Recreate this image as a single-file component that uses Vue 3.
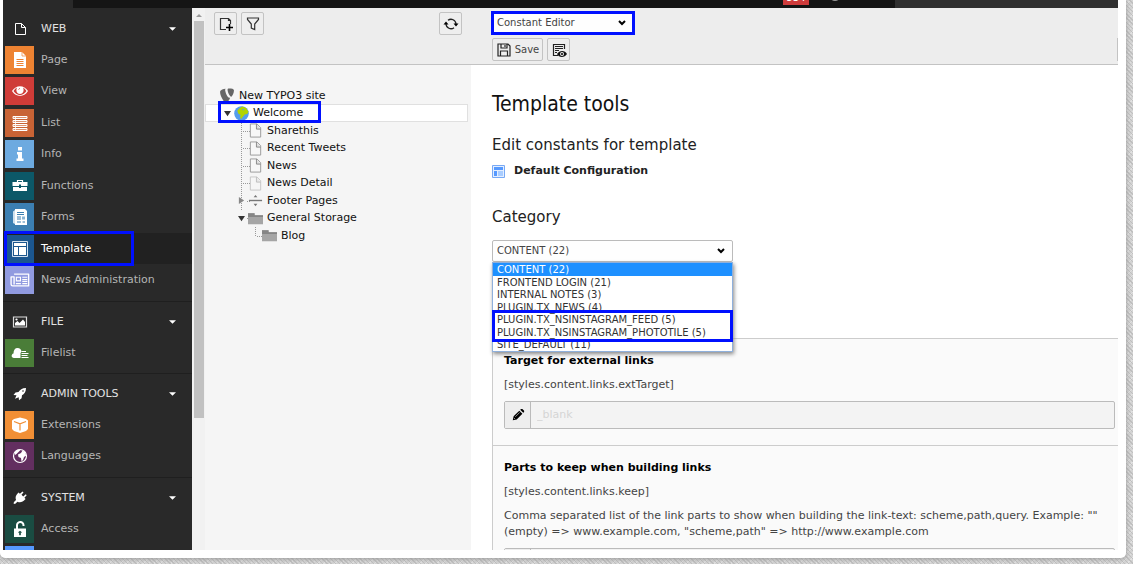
<script setup>
import { ref } from 'vue'

const modules = [
  {
    name: 'WEB', icon: 'file',
    items: [
      { label: 'Page', icon: 'page', tone: 'orange' },
      { label: 'View', icon: 'eye', tone: 'red' },
      { label: 'List', icon: 'list', tone: 'rust' },
      { label: 'Info', icon: 'info', tone: 'sky' },
      { label: 'Functions', icon: 'case', tone: 'teal' },
      { label: 'Forms', icon: 'forms', tone: 'steel' },
      { label: 'Template', icon: 'template', tone: 'navy', active: true },
      { label: 'News Administration', icon: 'news', tone: 'lilac' }
    ]
  },
  { name: 'FILE', icon: 'image', items: [{ label: 'Filelist', icon: 'cloud', tone: 'green' }] },
  {
    name: 'ADMIN TOOLS', icon: 'rocket',
    items: [
      { label: 'Extensions', icon: 'box', tone: 'amber' },
      { label: 'Languages', icon: 'globe', tone: 'plum' }
    ]
  },
  {
    name: 'SYSTEM', icon: 'plug',
    items: [
      { label: 'Access', icon: 'lock', tone: 'forest' },
      { label: '', icon: '', tone: 'blue' }
    ]
  }
]

const tree = [
  { label: 'New TYPO3 site', icon: 'typo3', depth: 0 },
  { label: 'Welcome', icon: 'earth', depth: 1, toggle: 'open', active: true },
  { label: 'Sharethis', icon: 'doc', depth: 2 },
  { label: 'Recent Tweets', icon: 'doc', depth: 2 },
  { label: 'News', icon: 'doc', depth: 2 },
  { label: 'News Detail', icon: 'doc', depth: 2, faded: true },
  { label: 'Footer Pages', icon: 'spacer', depth: 2, toggle: 'closed' },
  { label: 'General Storage', icon: 'folder', depth: 2, toggle: 'open' },
  { label: 'Blog', icon: 'folder', depth: 3 }
]

const categories = [
  'CONTENT (22)',
  'FRONTEND LOGIN (21)',
  'INTERNAL NOTES (3)',
  'PLUGIN.TX_NEWS (4)',
  'PLUGIN.TX_NSINSTAGRAM_FEED (5)',
  'PLUGIN.TX_NSINSTAGRAM_PHOTOTILE (5)',
  'SITE_DEFAULT (11)'
]
const category = ref(categories[0])
const tool = ref('Constant Editor')
</script>

<template>
  <div class="page">
    <div class="card">
      <div class="app">
        <header class="topbar">
          <div class="brand"></div>
          <div class="tools">
            <span class="badge">534</span>
            <span class="help"></span>
          </div>
          <div class="search"></div>
        </header>

        <div class="body">
          <nav class="modules">
            <section v-for="group in modules" :key="group.name" class="group">
              <button class="group-head" type="button">
                <span class="tile">
                  <svg v-if="group.icon === 'file'" viewBox="0 0 16 16"><path d="M3.500 2.500h6l4 4v7h-10zM9.500 2.500v4h4" fill="none" stroke="#fff" /></svg>
                  <svg v-else-if="group.icon === 'image'" viewBox="0 0 16 16"><path d="M1.500 3h13v10h-13z" fill="none" stroke="#ddd" stroke-width="1.200" /><path d="M3 11.500V9l2.500-2 2 2 3.500-3.500 2 2.500v3.500z" fill="#fff" /><circle cx="4.500" cy="5.500" r="1.100" fill="#fff" /></svg>
                  <svg v-else-if="group.icon === 'rocket'" viewBox="0 0 16 16"><path d="M14 2c-4 0-6 2-7.500 4L3.500 6.500 1.500 9l3 .3L3 12.800l3.700-1.500.3 3 2.600-2 .4-3C12 8 14 6 14 2z" fill="#fff" /><circle cx="11" cy="5" r=".8" fill="#292929" /></svg>
                  <svg v-else viewBox="0 0 16 16"><path d="M10.500 1.500l1 1-2 2.300 1.700 1.700 2.600-2.200.9.900-2.300 2.600 1.200 1.200-.8.800C11 12 8 13 5.500 11.700L3 14l-1.500-.5L2 12l2-2C3 7.500 4 5 5.800 3.300l.8-.8L7.900 3.800z" fill="#fff" /></svg>
                </span>
                <span class="label">{{ group.name }}</span>
                <svg class="caret" viewBox="0 0 8 4"><path d="M0 0h8L4 4z" fill="#fff" /></svg>
              </button>
              <a v-for="item in group.items" :key="item.label" href="#" class="item" :class="{ active: item.active }">
                <span class="tile" :class="item.tone">
                  <svg v-if="item.icon === 'page'" viewBox="0 0 16 16"><path d="M2 0h8l4 4v12H2z" fill="#fff" /><path d="M10 0v4h4" fill="none" stroke="#ee8332" stroke-width=".7" /><path d="M4.500 7.500h7M4.500 9.500h7M4.500 11.500h7M4.500 13.500h7" stroke="#ee8332" /></svg>
                  <svg v-else-if="item.icon === 'eye'" viewBox="0 0 16 16"><path d="M0 8c4-6.500 12-6.500 16 0-4 6.500-12 6.500-16 0z" fill="#fff" /><path d="M1.500 8C3 5.500 5 4.500 5 4.500c-1.500 3 0 6.500 3 6.500s4.500-3.500 3-6.500c0 0 2 1 3.500 3.500C11 13.500 5 13.500 1.500 8z" fill="#cf3c38" /><path d="M6.500 6.500a2 2 0 0 1 1.500-1" fill="none" stroke="#cf3c38" stroke-width=".8" /></svg>
                  <svg v-else-if="item.icon === 'list'" viewBox="0 0 16 16"><path d="M1 1.500h14v2H1zM1 5.500h14v2H1zM1 9.500h14v2H1zM1 13.500h14v2H1z" fill="#dd9270" stroke="#fff" /><path d="M3.500 1v14" stroke="#fff" stroke-width=".8" /></svg>
                  <svg v-else-if="item.icon === 'info'" viewBox="0 0 16 16"><path d="M6 1h4v3.500H6zM5 6h5v6.500h1.500V15h-7v-2.500H6v-4H5z" fill="#fff" /></svg>
                  <svg v-else-if="item.icon === 'case'" viewBox="0 0 16 16"><path d="M5.500 4V2.500h5V4" fill="none" stroke="#fff" stroke-width="1.200" /><path d="M.5 4h15v4H.5zM1 9h14v4H1z" fill="#fff" /><path d="M7 6.500h2V10H7z" fill="#0c5868" /></svg>
                  <svg v-else-if="item.icon === 'forms'" viewBox="0 0 16 16"><path d="M1 2.500L3 1v14l-2-1z" fill="#cfe0ee" /><path d="M3 0h10l2 2v14H3z" fill="#fff" /><path d="M5 3.500h7M5 5.500h7M5 8h4M5 10h4M5 13h4M10.500 13h2.500" stroke="#3c7fb2" stroke-width="1.100" /><path d="M10 7.500h3v3h-3z" fill="#8bb4d3" /></svg>
                  <svg v-else-if="item.icon === 'template'" viewBox="0 0 16 16"><path d="M.5.500h15v15H.5z" fill="none" stroke="#d5e2ee" /><path d="M2 2h12v3H2zM2 6h4v8H2zM7 6h7v8H7z" fill="#fff" /></svg>
                  <svg v-else-if="item.icon === 'news'" viewBox="0 0 22 16" class="wide"><path d="M4.500 1.500h16v13H3c-1 0-1.800-.7-1.800-1.700V4.500h3.300v8.500" fill="none" stroke="#fff" stroke-width="1.500" stroke-linejoin="round" /><path d="M7 5h4.500v4H7z" fill="none" stroke="#fff" stroke-width="1.200" /><path d="M13.500 5H19M13.500 7.500H19M13.500 9.500H19M6.500 12H12M13.500 12H19" stroke="#fff" stroke-width="1.200" /></svg>
                  <svg v-else-if="item.icon === 'cloud'" viewBox="0 0 18 16" class="wide"><path d="M9.500 13H3C0 13 0 9 2.500 8.500 2.500 5 4 3 6.500 3s3.500 1.500 4 3.500L9.500 8z" fill="#fff" /><path d="M10.500 6.500H15M10.500 8.500h7M10.500 10.500h6M10.500 12.500h7" stroke="#fff" stroke-width="1.100" /></svg>
                  <svg v-else-if="item.icon === 'box'" viewBox="0 0 16 16"><path d="M0 3.500L2 2l6-1.500L14 2l2 1.500V12l-2 2-6 2-6-2-2-2z" fill="#fff" /><path d="M2 4.500l6 2.300 6-2.300M8 7v6.500" fill="none" stroke="#f18f35" stroke-width="1.200" /></svg>
                  <svg v-else-if="item.icon === 'globe'" viewBox="0 0 16 16"><circle cx="8" cy="8" r="6.500" fill="none" stroke="#fff" stroke-width="1.200" /><path d="M3 4l3-2.500 2.500.5L7 3.500 4.500 6 3 7zM6 6.500L9 5l1.500-2.500L13 4l1.200 3.500L12 9l-1 3-1.500 1.500L9 10 6.500 9z" fill="#fff" /></svg>
                  <svg v-else-if="item.icon === 'lock'" viewBox="0 0 16 16"><path d="M5 8V4.500a3 3 0 0 1 6.500-.5v1" fill="none" stroke="#fff" stroke-width="2" /><path d="M2 7.500h12V16H2z" fill="#fff" /><path d="M8 10l1.500 1.300L8.500 12v2h-1v-2l-1-.7z" fill="#1a4c42" stroke="#1a4c42" stroke-width=".6" /></svg>
                </span>
                <span class="label">{{ item.label }}</span>
                <span v-if="item.active" class="mark"></span>
              </a>
            </section>
          </nav>

          <div class="scroll" aria-hidden="true">
            <svg class="scroll-up" viewBox="0 0 8 4"><path d="M4 0l4 4H0z" fill="#9b9b9b" /></svg>
            <div class="thumb"></div>
          </div>

          <aside class="tree-panel">
            <div class="toolbar tree-tools">
              <button class="btn icon-btn" type="button" aria-label="New page"><svg viewBox="0 0 16 16"><path d="M8 13.500H2.500v-11h8l2 2V8M10.500 2.500v2h2" fill="none" stroke="#333" stroke-width="1.200" /><path d="M11.500 8v7M8 11.500h7" stroke="#000" stroke-width="1.600" /></svg></button>
              <button class="btn icon-btn" type="button" aria-label="Filter"><svg viewBox="0 0 16 16"><path d="M2.500 2h11v1.500L9.700 8v5.500L6.300 12V8L2.500 3.500z" fill="none" stroke="#333" stroke-width="1.200" /></svg></button>
              <button class="btn icon-btn refresh" type="button" aria-label="Refresh"><svg viewBox="0 0 16 16"><path d="M5 4.300A5 5 0 0 1 13 8M11 11.700A5 5 0 0 1 3 8" fill="none" stroke="#222" stroke-width="1.300" /><path d="M10.500 7.500h5L13 10.500zM.5 8.500h5L3 5.500z" fill="#000" /></svg></button>
            </div>
            <div class="tree">
              <svg class="lines" width="80" height="160" aria-hidden="true">
                <path d="M22.500 13v6M27 26.500h4M36.500 36v88M38 44.500h8M38 61.500h8M38 79.500h8M38 96.500h8M42 114.500h4M42 131.500h3M50.500 140v9M52 149.500h8" fill="none" stroke="#999" stroke-dasharray="1 1" />
              </svg>
              <a v-for="node in tree" :key="node.label" href="#" class="node" :class="['d' + node.depth, { active: node.active }]">
                <svg class="toggle" viewBox="0 0 8 8"><path v-if="node.toggle === 'open'" d="M0 1h8L4 7z" fill="#333" /><path v-else-if="node.toggle === 'closed'" d="M1 0l6 4-6 4z" fill="#888" /></svg>
                <svg v-if="node.icon === 'typo3'" class="node-icon" viewBox="0 0 16 16"><path d="M10.800 10.300c-.3.100-.5.100-.8.100-2.300 0-4.500-6.500-4.500-8.200 0-.8.200-1.100.5-1.400C3.200 1.100 1 2 .5 3c-.3.300-.4.800-.4 1.400 0 3 3.200 9.700 5.900 11.300 1.800-.1 3.800-2.500 4.800-5.400M9.700.6c2.600 0 5.200.4 5.200 1.900 0 3-1.900 6.700-2.900 6.700-1.700 0-3.900-4.900-3.900-7.300 0-1.100.4-1.300 1.600-1.300" fill="#666" /></svg>
                <svg v-else-if="node.icon === 'earth'" class="node-icon" viewBox="0 0 16 16"><circle cx="8" cy="8" r="7.800" fill="#559dec" /><path d="M3.500 5L6 2l3-1.500L13 2l2.500 4L14 8.500l-2.500.5-2.500 3-1.500 2-1-2L7 9.500 4.500 8z" fill="#b2d400" /><path d="M8.500 3.500l2-.5-.5 2z" fill="#559dec" /></svg>
                <svg v-else-if="node.icon === 'doc'" class="node-icon" :class="{ faded: node.faded }" viewBox="0 0 16 16"><path d="M2.500 1h7L13.500 5v10h-11z" fill="#f7f7f7" stroke="#999" /><path d="M9 1v5.500h4.500" fill="#ddd" stroke="#888" /></svg>
                <svg v-else-if="node.icon === 'spacer'" class="node-icon" viewBox="0 0 16 16"><path d="M1 8h14" stroke="#777" stroke-width="1.500" /><path d="M8 2l2 2.500H6zM8 14l2-2.500H6z" fill="#777" /></svg>
                <svg v-else class="node-icon" viewBox="0 0 16 16"><path d="M0 2.500h7v2h9V14H0z" fill="#a5a5a5" /><path d="M0 2.500h7v2h9v2H0z" fill="#858585" /></svg>
                <span>{{ node.label }}</span>
                <span v-if="node.active" class="mark"></span>
              </a>
            </div>
          </aside>

          <main class="content">
            <div class="toolbar">
              <div class="select-wrap tool-select">
                <select v-model="tool" aria-label="Template tool"><option>Constant Editor</option></select>
                <svg class="chevron" viewBox="0 0 8 6"><path d="M1 1l3 3 3-3" fill="none" stroke="#000" stroke-width="2" /></svg>
                <span class="mark"></span>
              </div>
              <div class="actions">
                <button class="btn save" type="button"><svg viewBox="0 0 16 16"><path d="M2 2h10l2 2v10H2zM5 2v4h6V2M9 3v2M4.500 14V9h7v5" fill="none" stroke="#222" stroke-width="1.200" /></svg>Save</button>
                <button class="btn icon-btn" type="button" aria-label="Save and view"><svg viewBox="0 0 16 16"><path d="M7 13.500H2.500v-11h11V7M4 4.500h8M4 6.500h8M4 8.500h4M4 10.500h2" fill="none" stroke="#222" stroke-width="1.200" /><path d="M6 12c2.500-4 8-4 10 0-2.500 4-8 4-10 0z" fill="#111" /><circle cx="11" cy="12" r="2" fill="#eee" /><circle cx="11" cy="12" r="1.100" fill="#111" /></svg></button>
                <span class="edge"></span>
              </div>
            </div>

            <div class="module">
              <h1>Template tools</h1>
              <h2>Edit constants for template</h2>
              <p class="config">
                <svg viewBox="0 0 13 13"><path d="M.5.500h12v12H.5z" fill="#e4efff" stroke="#78a9f5" /><path d="M2 2h9v3H2zM2 6h3v5H2z" fill="#5599ff" /><path d="M6 6h5v5H6z" fill="#a9cdff" /></svg>
                <strong>Default Configuration</strong>
              </p>
              <h2><label for="category">Category</label></h2>
              <div class="select-wrap category">
                <select id="category" v-model="category"><option v-for="c in categories" :key="c">{{ c }}</option></select>
                <svg class="chevron" viewBox="0 0 8 6"><path d="M1 1l3 3 3-3" fill="none" stroke="#000" stroke-width="2" /></svg>
                <ul class="popup" role="listbox" aria-label="Category">
                  <li v-for="c in categories" :key="c" role="option" :aria-selected="c === category" @click="category = c">{{ c }}</li>
                  <li class="mark" role="presentation"></li>
                </ul>
              </div>

              <div class="constants">
                <section class="constant">
                  <h3><label for="ext-target">Target for external links</label></h3>
                  <p>[styles.content.links.extTarget]</p>
                  <div class="field">
                    <button type="button" aria-label="Edit target"><svg viewBox="0 0 16 16"><path d="M2 14l1-4.500 6.500-6.500L13 6.500 6.500 13zM10.500 2l1-1h1.500L15 3v1.500l-1 1z" fill="#000" /><path d="M3.500 11.500l1 1M5 10l5-5" stroke="#ddd" stroke-width=".8" /></svg></button>
                    <input id="ext-target" type="text" placeholder="_blank" disabled />
                  </div>
                </section>
                <section class="constant">
                  <h3><label for="keep">Parts to keep when building links</label></h3>
                  <p>[styles.content.links.keep]</p>
                  <p>Comma separated list of the link parts to show when building the link-text: scheme,path,query. Example: ""<br />(empty) =&gt; www.example.com, "scheme,path" =&gt; http://www.example.com</p>
                  <div class="field">
                    <button type="button" aria-label="Edit parts"></button>
                    <input id="keep" type="text" disabled />
                  </div>
                </section>
              </div>
            </div>
          </main>
        </div>
      </div>
    </div>
  </div>
</template>

<style>
body {
  margin: 0;
}
</style>

<style scoped>
* {
  box-sizing: border-box;
}
.page {
  height: 100vh;
  padding: 0 7px 6px 0;
  overflow: hidden;
  font: 11px/16px "DejaVu Sans", Verdana, sans-serif;
  color: #222;
  background-color: #d4d4d4;
  background-image:
    repeating-linear-gradient(45deg, #c0c0c0 0 1px, transparent 1px 3px),
    repeating-linear-gradient(-45deg, #e2e2e2 0 1px, transparent 1px 4px);
}
.card {
  height: 100%;
  padding: 0 8px 8px 3px;
  background: #fff;
  border-radius: 0 0 5px 5px;
  box-shadow: 0 1px 5px #999;
}
.app {
  display: flex;
  flex-direction: column;
  height: 100%;
  overflow: hidden;
}
a {
  color: inherit;
  text-decoration: none;
}
button, select, input {
  font: inherit;
  color: inherit;
}
svg {
  display: block;
  flex: none;
}
.mark {
  position: absolute;
  border: 3px solid #0010ff;
  pointer-events: none;
}

.topbar {
  display: flex;
  flex: none;
  height: 8px;
  background: #151515;
  overflow: hidden;
}
.brand {
  width: 70px;
  background: #292929;
}
.tools {
  display: flex;
  flex: 1;
  justify-content: flex-end;
  align-items: flex-end;
  padding: 0 54px 3px 0;
  gap: 20px;
}
.badge {
  width: 26px;
  padding-bottom: 1px;
  background: #cf3c3c;
  color: #fff;
  font-size: 10px;
  line-height: 12px;
  text-align: center;
}
.help {
  width: 12px;
  height: 12px;
  margin-bottom: 4px;
  border-radius: 6px;
  background: #999;
}
.search {
  flex: 0 0 20%;
  background: #303030;
}

.body {
  display: flex;
  flex: 1;
  min-height: 0;
}
.modules {
  flex: 0 0 189px;
  overflow: hidden;
  background: #292929;
  color: #b5b5b5;
}
.group {
  padding: 4px 0 5px;
  border-top: 1px solid #1f1f1f;
}
.group:first-child {
  border-top-color: #292929;
}
.group-head {
  display: flex;
  align-items: center;
  width: 100%;
  height: 31px;
  padding: 0 16px 0 2px;
  border: 0;
  background: none;
  color: #e2e2e2;
  text-align: left;
}
.item {
  position: relative;
  display: flex;
  align-items: center;
  height: 32px;
  padding-left: 2px;
}
.item:nth-child(even) {
  height: 31px;
}
.item.active {
  background: #212121;
  color: #fff;
}
.item .mark {
  top: -2px;
  left: 1px;
  width: 130px;
  height: 35px;
}
.tile {
  display: flex;
  flex: none;
  align-items: center;
  justify-content: center;
  width: 29px;
  height: 28px;
  margin-right: 7px;
}
.tile svg {
  width: 16px;
  height: 16px;
}
.tile .wide {
  width: 20px;
}
.label {
  flex: 1;
}
.caret {
  width: 7px;
  height: 4px;
}
.orange { background: #ee8332; }
.red { background: #cf3c38; }
.rust { background: #c86335; }
.sky { background: #6daae0; }
.teal { background: #0c5868; }
.steel { background: #3c7fb2; }
.navy { background: #1b568f; }
.lilac { background: #919be0; }
.green { background: #4a7d38; }
.amber { background: #f18f35; }
.plum { background: #632f60; }
.forest { background: #1a4c42; }
.blue { background: #5599ff; }

.scroll {
  flex: 0 0 13px;
  padding: 6px 1px 0 2px;
  background: #f1f1f1;
}
.scroll-up {
  width: 6px;
  height: 3px;
  margin: 0 auto 4px 2px;
}
.thumb {
  width: 10px;
  height: 74%;
  background: #c1c1c1;
}

.toolbar {
  height: 57px;
  border-bottom: 1px solid #c3c3c3;
  background: #ededed;
}
.btn {
  display: flex;
  align-items: center;
  justify-content: center;
  height: 23px;
  padding: 0;
  border: 1px solid #c3c3c3;
  border-radius: 2px;
  background: #eee;
  font-size: 10px;
}
.btn svg {
  width: 16px;
  height: 16px;
}
.icon-btn {
  width: 23px;
}
.tree-panel {
  flex: 0 0 266px;
  background: #f5f5f5;
}
.tree-tools {
  display: flex;
  align-items: flex-start;
  gap: 4px;
  padding: 4px 9px;
}
.refresh {
  margin-left: auto;
}
.tree {
  position: relative;
  padding-top: 22px;
  margin-right: 3px;
  color: #111;
}
.lines {
  position: absolute;
  top: 22px;
  left: 0;
}
.node {
  position: relative;
  display: flex;
  align-items: center;
  height: 17px;
}
.node:nth-child(odd) {
  height: 18px;
}
.node.active {
  background: #fff;
  box-shadow: inset 0 0 0 1px #e0e0e0;
}
.node .mark {
  top: -3px;
  left: 13px;
  width: 103px;
  height: 22px;
}
.d0 { padding-left: 5px; }
.d1 { padding-left: 19px; }
.d2 { padding-left: 33px; }
.d3 { padding-left: 47px; }
.toggle {
  width: 7px;
  height: 7px;
  margin-right: 3px;
}
.node-icon {
  width: 15px;
  height: 15px;
  margin-right: 4px;
}
.faded {
  opacity: 0.5;
}

.content {
  flex: 1;
  min-width: 0;
  overflow: hidden;
  background: #fff;
}
.content .toolbar {
  padding: 4px 0 0 21px;
}
.select-wrap {
  position: relative;
  font-size: 10px;
}
select {
  width: 100%;
  height: 22px;
  padding: 0 4px;
  border: 1px solid #bbb;
  border-radius: 2px;
  background: #fefefe;
  color: #444;
  appearance: none;
}
.chevron {
  position: absolute;
  top: 8px;
  right: 8px;
  width: 8px;
  height: 6px;
}
.tool-select {
  width: 142px;
}
.tool-select .mark {
  inset: -1px;
}
.actions {
  display: flex;
  gap: 4px;
  margin-top: 4px;
}
.save {
  width: 51px;
  gap: 3px;
  color: #444;
}
.edge {
  width: 1px;
  margin-left: auto;
  background: #c3c3c3;
}

.module {
  padding: 25px 0 0 21px;
}
h1, h2, h3, p {
  margin: 0;
}
h1 {
  font: 400 21px/28px "DejaVu Sans Condensed", "DejaVu Sans", sans-serif;
  color: #111;
}
h2 {
  margin-top: 17px;
  font-size: 15px;
  line-height: 20px;
  font-weight: 400;
}
.config {
  display: flex;
  align-items: center;
  gap: 9px;
  height: 16px;
  margin: 8px 0 28px;
}
.config svg {
  width: 13px;
  height: 13px;
}
.category {
  width: 241px;
  margin-top: 13px;
}
.popup {
  position: absolute;
  z-index: 1;
  top: 22px;
  left: 0;
  width: 100%;
  margin: 0;
  padding: 0;
  border: 1px solid #8fb0dc;
  background: #fff;
  box-shadow: 1px 2px 4px #888;
  color: #333;
  line-height: 13px;
  list-style: none;
}
.popup li {
  height: 12px;
  padding-left: 4px;
}
.popup li:nth-child(odd) {
  height: 13px;
}
.popup li[aria-selected="true"] {
  background: #1e90ff;
  color: #fff;
}
.popup .mark {
  bottom: 9px;
  left: -1px;
  width: 241px;
  height: 32px;
}
.constants {
  margin-top: 76px;
  border: solid #ccc;
  border-width: 1px 0 0 1px;
  background: #fafafa;
}
.constant {
  padding: 14px 3px 16px 11px;
  color: #444;
}
.constant + .constant {
  border-top: 1px solid #ccc;
}
h3 {
  font-size: 11px;
  line-height: 16px;
  color: #000;
}
.constant p {
  margin-top: 8px;
}
.field {
  display: flex;
  height: 28px;
  margin-top: 8px;
  border: 1px solid #bbb;
  border-radius: 2px;
  background: #f3f3f3;
}
.field button {
  display: flex;
  align-items: center;
  justify-content: center;
  width: 26px;
  padding: 0;
  border: 0;
  border-right: 1px solid #bbb;
  background: #eee;
}
.field svg {
  width: 14px;
  height: 14px;
}
.field input {
  flex: 1;
  padding: 0 6px;
  border: 0;
  background: transparent;
}
.field input::placeholder {
  color: #d5d5d5;
}
</style>
